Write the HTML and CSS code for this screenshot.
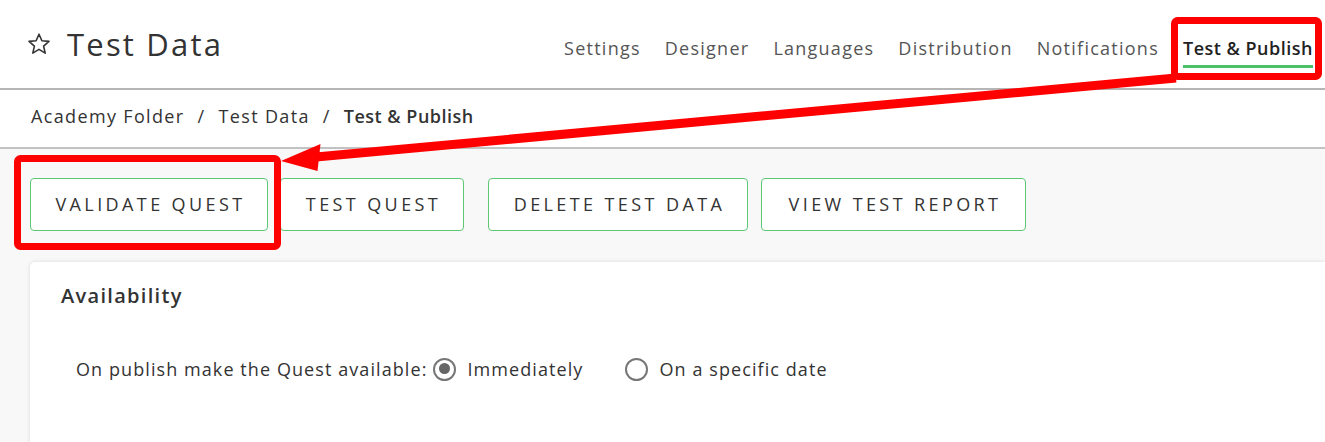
FILE: index.html
```html
<!DOCTYPE html>
<html>
<head>
<meta charset="utf-8">
<link rel="stylesheet" href="styles.css">
</head>
<body>
<div class="page">
  <header class="topbar">
    <div class="title">
      <svg class="star" width="24" height="24" viewBox="0 0 24 24"><path d="M12 2.2l2.9 6.6 7.1.6-5.4 4.7 1.6 7-6.2-3.7-6.2 3.7 1.6-7L2 9.4l7.1-.6z" fill="none" stroke="#333" stroke-width="1.6" stroke-linejoin="round"/></svg>
      <h1>Test Data</h1>
    </div>
    <nav class="tabs">
      <a class="tab">Settings</a>
      <a class="tab">Designer</a>
      <a class="tab">Languages</a>
      <a class="tab">Distribution</a>
      <a class="tab">Notifications</a>
      <a class="tab active">Test &amp; Publish</a>
    </nav>
  </header>
  <div class="crumbs">
    <span>Academy Folder</span><span class="sep">/</span><span>Test Data</span><span class="sep">/</span><span class="current">Test &amp; Publish</span>
  </div>
  <main class="content">
    <div class="actions">
      <button class="btn b1">Validate Quest</button>
      <button class="btn b2">Test Quest</button>
      <button class="btn b3">Delete Test Data</button>
      <button class="btn b4">View Test Report</button>
    </div>
    <section class="card">
      <h2>Availability</h2>
      <div class="row">
        <span class="label">On publish make the Quest available:</span>
        <label class="radio checked"><span class="dot"></span>Immediately</label>
        <label class="radio"><span class="dot"></span>On a specific date</label>
      </div>
    </section>
  </main>
  <svg class="annot" width="1325" height="442" viewBox="0 0 1325 442">
    <rect x="1174.5" y="20.5" width="144" height="56" rx="3" fill="none" stroke="#ff0000" stroke-width="7"/>
    <rect x="17.5" y="158.5" width="260" height="88" rx="3" fill="none" stroke="#ff0000" stroke-width="7"/>
    <line x1="1176" y1="78" x2="316" y2="157" stroke="#ff0000" stroke-width="9"/>
    <polygon points="281,161 320.5,144 317.5,171" fill="#ff0000"/>
  </svg>
</div>
</body>
</html>
```
FILE: styles.css
```css
* { box-sizing: border-box; }
html, body { margin: 0; padding: 0; }
body {
  font-family: "Open Sans", "Noto Sans", sans-serif;
  color: #333;
  background: #f8f8f8;
  width: 1325px;
  height: 442px;
  overflow: hidden;
}
.page { position: relative; width: 1325px; height: 442px; }
.topbar {
  height: 90px;
  background: #fff;
  border-bottom: 2px solid #b5b5b5;
  display: flex;
  align-items: flex-start;
  justify-content: space-between;
}
.title {
  display: flex;
  align-items: center;
  gap: 16px;
  padding: 25px 0 0 27px;
}
.star { display: block; }
.title h1 {
  margin: 0;
  font-size: 31px;
  font-weight: 400;
  color: #333;
  letter-spacing: 2.2px;
  line-height: 38px;
}
.tabs {
  display: flex;
  gap: 24px;
  padding: 34px 12px 0 0;
}
.tab {
  font-size: 18px;
  color: #555;
  line-height: 28px;
  letter-spacing: 1.25px;
  padding-bottom: 3px;
  border-bottom: 3px solid transparent;
}
.tab.active {
  color: #222;
  font-weight: 600;
  letter-spacing: 0.5px;
  border-bottom-color: #4cc06a;
}
.crumbs {
  height: 59px;
  background: #fff;
  border-bottom: 2px solid #c2c2c2;
  display: flex;
  align-items: center;
  padding: 0 0 5px 31px;
  font-size: 18px;
  color: #333;
  letter-spacing: 1.35px;
}
.crumbs .sep { margin: 0 13px 0 13px; }
.crumbs .current { font-weight: 600; letter-spacing: 0.5px; }
.content { padding: 29px 0 0 30px; }
.actions { display: flex; gap: 12px; }
.btn {
  height: 53px;
  background: #fff;
  border: 1px solid #5ec776;
  border-radius: 4px;
  font-family: inherit;
  font-size: 18px;
  color: #333;
  text-transform: uppercase;
  letter-spacing: 3.4px;
  padding: 0 0 2px 3px;
}
.b1 { width: 238px; }
.b2 { width: 184px; }
.b3 { width: 260px; margin-left: 12px; }
.b4 { width: 265px; margin-left: 1px; }
.card {
  margin-top: 31px;
  background: #fff;
  border-radius: 5px 0 0 0;
  box-shadow: 0 0 4px rgba(0,0,0,0.12);
  height: 200px;
  padding: 20px 0 0 31px;
}
.card h2 {
  margin: 0;
  font-size: 20px;
  font-weight: 600;
  color: #333;
  letter-spacing: 1.3px;
  line-height: 28px;
}
.row {
  display: flex;
  align-items: center;
  margin-top: 47px;
  padding-left: 15px;
  font-size: 18px;
  color: #333;
  letter-spacing: 1.08px;
}
.label { margin-right: 6px; }
.radio { display: flex; align-items: center; gap: 11px; margin-right: 42px; }
.dot {
  width: 23px; height: 23px;
  border: 2.5px solid #777;
  border-radius: 50%;
  background: #fff;
  position: relative;
}
.radio.checked .dot::after {
  content: "";
  position: absolute;
  left: 3.5px; top: 3.5px;
  width: 11px; height: 11px;
  border-radius: 50%;
  background: #666;
}
.annot { position: absolute; left: 0; top: 0; pointer-events: none; }
```
